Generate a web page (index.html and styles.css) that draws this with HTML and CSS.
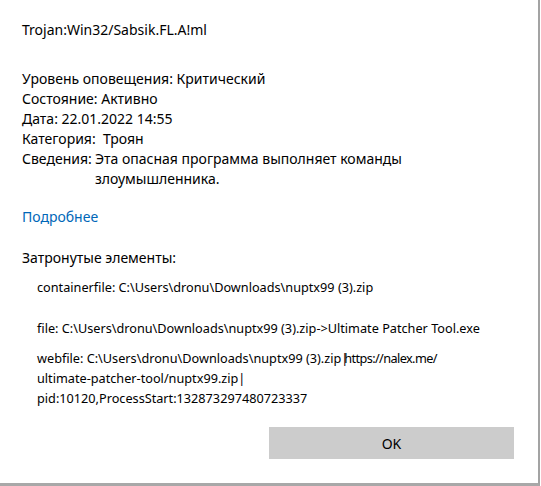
FILE: index.html
```html
<!DOCTYPE html>
<html lang="ru">
<head>
<meta charset="utf-8">
<link rel="stylesheet" href="styles.css">
</head>
<body>
<div class="dialog">
  <div class="content">
    <div class="threat">Trojan:Win32/Sabsik.FL.A!ml</div>
    <div class="props">
      <div class="row">Уровень оповещения: Критический</div>
      <div class="row">Состояние: Активно</div>
      <div class="row">Дата: 22.01.2022 14:55</div>
      <div class="row">Категория:&nbsp; Троян</div>
      <div class="row split"><span class="label">Сведения:</span><span class="value">Эта опасная программа выполняет команды злоумышленника.</span></div>
    </div>
    <a class="more" href="#">Подробнее</a>
    <div class="affected-title">Затронутые элементы:</div>
    <div class="items">
      <div class="item i1">containerfile: C:\Users\dronu\Downloads\nuptx99 (3).zip</div>
      <div class="item i2">file: C:\Users\dronu\Downloads\nuptx99 (3).zip-&gt;Ultimate Patcher Tool.exe</div>
      <div class="item i3">webfile: C:\Users\dronu\Downloads\nuptx99 (3).zip<span class="pipe">|</span><span class="url">https://nalex.me/</span><br>ultimate-patcher-tool/nuptx99.zip|<br>pid:10120,ProcessStart:132873297480723337</div>
    </div>
  </div>
  <div class="actions">
    <button class="ok">OK</button>
  </div>
</div>
</body>
</html>
```
FILE: styles.css
```css
html, body {
  margin: 0;
  padding: 0;
  background: #ffffff;
}
body {
  font-family: "Noto Sans", "Open Sans", sans-serif;
  font-size: 14px;
  color: #000;
}
.dialog {
  width: 538px;
  height: 483px;
  border-right: 2px solid #a3a3a3;
  border-bottom: 3px solid #a8a8a8;
  background: #fff;
  display: flex;
  flex-direction: column;
}
.content {
  padding: 20px 0 0 22px;
  line-height: 20px;
}
.threat {
  margin-bottom: 29px;
}
.row.split {
  display: flex;
}
.row.split .label {
  flex: none;
  width: 73px;
}
.row.split .value {
  width: 340px;
}
.more {
  display: block;
  margin-top: 18px;
  color: #0067b8;
  text-decoration: none;
}
.affected-title {
  margin-top: 21px;
}
.items {
  padding-left: 15px;
  font-size: 12.7px;
}
.pipe {
  letter-spacing: -4px;
}
.url {
  letter-spacing: -0.6px;
}
.i1 { margin-top: 9px; }
.i2 { margin-top: 21px; }
.i3 { margin-top: 10px; }
.actions {
  margin-top: auto;
  display: flex;
  justify-content: flex-end;
  padding: 0 24px 24px 0;
}
.ok {
  width: 245px;
  height: 32px;
  border: none;
  background: #cccccc;
  font-family: inherit;
  font-size: 14px;
  color: #000;
  padding: 0;
}
```
